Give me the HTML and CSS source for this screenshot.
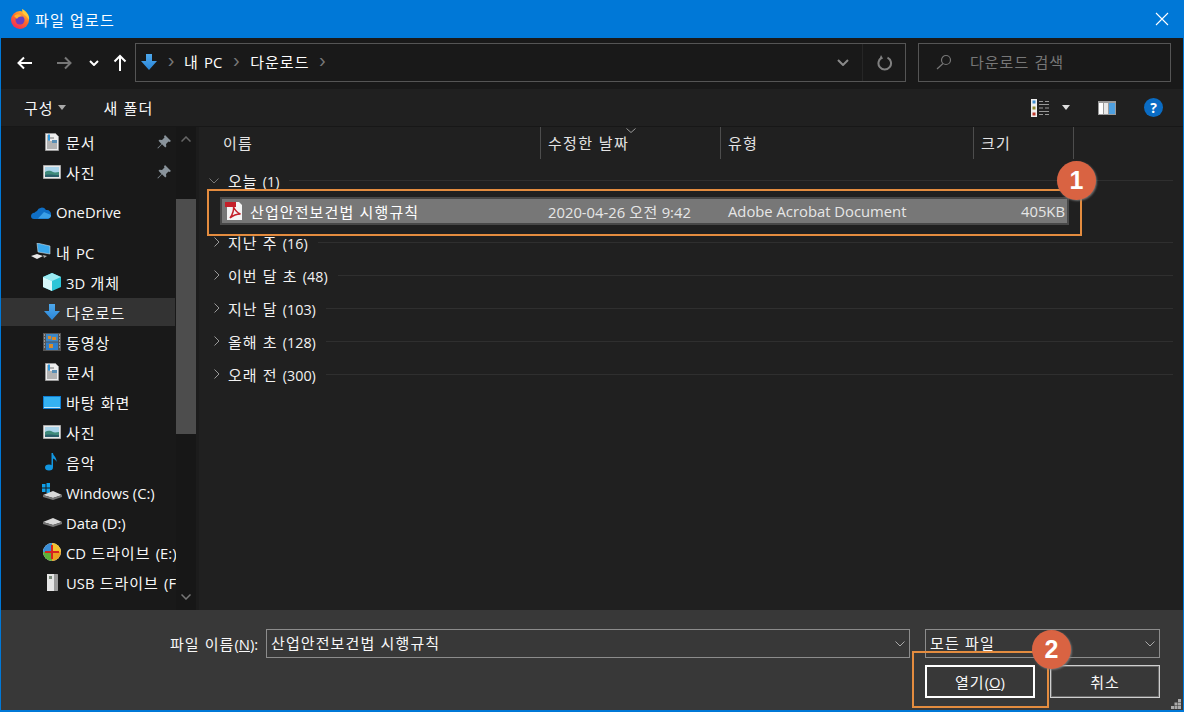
FILE: index.html
```html
<!DOCTYPE html>
<html lang="ko">
<head>
<meta charset="utf-8">
<title>파일 업로드</title>
<link rel="stylesheet" href="styles.css">
</head>
<body>
<svg class="defs" width="0" height="0" aria-hidden="true">
  <defs>
    <linearGradient id="ffg" x1="0.8" y1="0" x2="0.2" y2="1"><stop offset="0" stop-color="#ffc63a"/><stop offset=".45" stop-color="#ff6a2a"/><stop offset="1" stop-color="#f0245e"/></linearGradient>
    <linearGradient id="blue" x1="0" y1="0" x2="0" y2="1"><stop offset="0" stop-color="#4ea8ec"/><stop offset="1" stop-color="#2a86d8"/></linearGradient>
    <symbol id="i-down" viewBox="0 0 18 18"><path d="M6 1h6v7h5l-8 9-8-9h5z" fill="url(#blue)"/></symbol>
    <symbol id="i-doc" viewBox="0 0 18 18"><path d="M2.500.5h10l3 3v14h-13z" fill="#eee" stroke="#999"/><path d="M4 3h3M4 5h7M4 7h3M4 9h10M4 11h10M4 13h10M4 15h10" stroke="#777"/><path d="M5 1.500h2v6H5z" fill="#2f9ae0"/><path d="M9 7h5v3H9z" fill="#5a8fb5"/></symbol>
    <symbol id="i-pic" viewBox="0 0 18 14"><path d="M.5.500h17v13H.5z" fill="#e8e8e8" stroke="#aaa"/><path d="M2 2h14v10H2z" fill="#a9d4ea"/><path d="M2 7c3-2 6-1 8 0s4 0 6 0v5H2z" fill="#3f8a7a"/><path d="M2 10c4-1 8 0 14 0v2H2z" fill="#2a5f6b"/></symbol>
    <symbol id="i-pin" viewBox="0 0 14 14"><path d="M8 0l6 6-1.500 1-1-.5-2.500 2.500.3 2.500-1 1L5 9.200 1 13.500l-.6-.6L4.500 9 1.500 5.700l1-1 2.500.3L7.500 2.500 7 1.500z" fill="#8a949c"/></symbol>
  </defs>
</svg>

<div class="dialog">
  <header class="titlebar">
    <svg class="ff" width="20" height="20" viewBox="0 0 20 20"><circle cx="10" cy="11" r="9" fill="url(#ffg)"/><path d="M12 0c4 2 8 6 7 11-1-2-2-3-3-4-2-1-4-3-4-7z" fill="#ffcb3d"/><circle cx="10" cy="11" r="4.500" fill="#6a3fc2"/><path d="M4 7c3-3 7-2 9 1-3-1-5 0-6 2z" fill="#ffb02e"/></svg>
    <span class="ko title">파일 업로드</span>
    <svg class="close" width="14" height="14" viewBox="0 0 14 14"><path d="M1 1l12 12M13 1L1 13" stroke="#fff" stroke-width="1.100"/></svg>
  </header>

  <div class="addressbar">
    <div class="nav">
      <svg width="16" height="14" viewBox="0 0 16 14"><path d="M15 7H1.500M7 1.500L1.500 7 7 12.500" fill="none" stroke="#fff" stroke-width="2"/></svg>
      <svg class="fwd" width="16" height="14" viewBox="0 0 16 14"><path d="M1 7h13.500M9 1.500L14.500 7 9 12.500" fill="none" stroke="#777" stroke-width="2"/></svg>
      <svg class="hist" width="10" height="6" viewBox="0 0 10 6"><path d="M1 1l4 4 4-4" fill="none" stroke="#fff" stroke-width="2"/></svg>
      <svg class="up" width="14" height="17" viewBox="0 0 14 17"><path d="M7 17V2M1.500 7.500L7 2l5.500 5.500" fill="none" stroke="#fff" stroke-width="2"/></svg>
    </div>
    <div class="path">
      <svg class="path-icon" width="18" height="18"><use href="#i-down"/></svg>
      <span class="crumb-sep">›</span>
      <span class="ko crumb">내 <span class="la">PC</span></span>
      <span class="crumb-sep wide">›</span>
      <span class="ko crumb">다운로드</span>
      <span class="crumb-sep">›</span>
      <svg class="path-drop" width="12" height="7" viewBox="0 0 12 7"><path d="M1 1l5 5 5-5" fill="none" stroke="#8a8a8a" stroke-width="2"/></svg>
      <span class="path-div"></span>
      <svg class="refresh" width="16" height="16" viewBox="0 0 16 16"><path d="M10.500 2.600A6.300 6.300 0 1 1 5 2.600" fill="none" stroke="#808080" stroke-width="2"/><path d="M4 0l2 3.500L2 5z" fill="#808080"/></svg>
    </div>
    <div class="search">
      <svg width="16" height="16" viewBox="0 0 16 16"><circle cx="10" cy="6" r="4.500" fill="none" stroke="#777" stroke-width="1.200"/><path d="M7 9.500L1 15" stroke="#777" stroke-width="1.200"/></svg>
      <span class="ko">다운로드 검색</span>
    </div>
  </div>

  <div class="toolbar">
    <span class="ko tool">구성<i class="caret"></i></span>
    <span class="ko tool new">새 폴더</span>
    <span class="tool-right">
      <svg width="18" height="18" viewBox="0 0 18 18"><path d="M0 0h6v18H0z" fill="#eee"/><path d="M1.500 1.500h3v3h-3z" fill="#3f8fd0"/><path d="M1.500 7.500h3v3h-3z" fill="#8f8a30"/><path d="M1.500 13.500h3v3h-3z" fill="#c0392b"/><path d="M8 2.500h4M14 2.500h4M8 5.500h10M8 9h4M14 9h4M8 12.500h10M8 15.500h4M14 15.500h4" stroke="#999"/></svg>
      <i class="caret light"></i>
      <svg class="pane" width="18" height="14" viewBox="0 0 18 14"><path d="M0 0h18v14H0z" fill="#9a9a9a"/><path d="M1 2h4v11H1z" fill="#fff"/><path d="M6 2h4v11H6z" fill="#e8e8e8"/><path d="M11 2h6v11h-6z" fill="#4ea0e0"/></svg>
      <span class="help">?</span>
    </span>
  </div>

  <div class="body">
    <nav class="sidebar">
      <ul class="tree">
        <li class="row l2"><svg class="ic" width="18" height="18"><use href="#i-doc"/></svg><span class="ko lab">문서</span><svg class="pin" width="14" height="14"><use href="#i-pin"/></svg></li>
        <li class="row l2"><svg class="ic" width="18" height="14"><use href="#i-pic"/></svg><span class="ko lab">사진</span><svg class="pin" width="14" height="14"><use href="#i-pin"/></svg></li>
        <li class="row l1 gap"><svg class="ic" width="20" height="13" viewBox="0 0 20 13"><path d="M6 5a5 5 0 0 1 9-1 4 4 0 0 1 1 .100 4 4 0 0 1 4 4.400c0 2-1 4-3 4.500H3a3 3 0 0 1-3-3c0-2 2-3.500 3.500-3.200A4 4 0 0 1 6 5z" fill="#0f6fc6"/><path d="M7 12.500L13 6l7 3c0 2-1 3.500-3 3.500z" fill="#3aa0e8"/></svg><span class="la lab">OneDrive</span></li>
        <li class="row l1 gap"><svg class="ic" width="20" height="18" viewBox="0 0 20 18"><path d="M6 0l13 3v8L7 9z" fill="#3aa8ec" stroke="#cfd8dc" stroke-width=".6"/><path d="M0 13l6-2 6 2-6 3z" fill="#e8e8e8"/><path d="M12 12l4 1-3 2z" fill="#aaa"/></svg><span class="ko lab">내 <span class="la">PC</span></span></li>
        <li class="row l2"><svg class="ic" width="18" height="18" viewBox="0 0 18 18"><path d="M9 0l9 4v10l-9 4-9-4V4z" fill="#2cc5d8"/><path d="M9 0l9 4-9 4-9-4z" fill="#9beaf2"/><path d="M0 4l9 4v10l-9-4z" fill="#d8f8fb"/></svg><span class="ko lab"><span class="la">3D</span> 개체</span></li>
        <li class="row l2 active"><svg class="ic" width="18" height="18"><use href="#i-down"/></svg><span class="ko lab">다운로드</span></li>
        <li class="row l2"><svg class="ic" width="18" height="18" viewBox="0 0 18 18"><path d="M0 0h18v18H0z" fill="#555"/><path d="M3 1h12v7.500H3z" fill="#3d88c8"/><path d="M3 9.500h12V17H3z" fill="#2f7fcb"/><path d="M5 3h3v3H5zM9 4h4v3H9zM6 11h4v4H6z" fill="#d98b2b"/><path d="M1 2h1M1 5h1M1 8h1M1 11h1M1 14h1M16 2h1M16 5h1M16 8h1M16 11h1M16 14h1" stroke="#ddd"/></svg><span class="ko lab">동영상</span></li>
        <li class="row l2"><svg class="ic" width="18" height="18"><use href="#i-doc"/></svg><span class="ko lab">문서</span></li>
        <li class="row l2"><svg class="ic" width="18" height="13" viewBox="0 0 18 13"><path d="M0 0h18v13H0z" fill="#0f7fd4"/><path d="M1 1h16v10H1z" fill="#35b2f2"/><path d="M1 11h16v1H1z" fill="#bfe6fb"/></svg><span class="ko lab">바탕 화면</span></li>
        <li class="row l2"><svg class="ic" width="18" height="14"><use href="#i-pic"/></svg><span class="ko lab">사진</span></li>
        <li class="row l2"><svg class="ic" width="18" height="18" viewBox="0 0 18 18"><ellipse cx="6" cy="14.500" rx="4" ry="3" fill="#1296e0"/><path d="M8.500 14V0h1.500c0 3 4 4 3.500 9-.5-2-2-3-3.500-3.500V14z" fill="#1296e0"/></svg><span class="ko lab">음악</span></li>
        <li class="row l2 drive"><svg class="ic" width="20" height="18" viewBox="0 0 20 18"><path d="M0 1h3.500v3.500H0zM4.500 0H8v4.500H4.500zM0 5.500h3.500V9H0zM4.500 5.500H8V10H4.500z" fill="#0fa0ea"/><path d="M1 12l10-4 9 4-9 3z" fill="#d8d8d8"/><path d="M1 12l10 3 9-3v2l-9 3-10-3z" fill="#777"/></svg><span class="la lab">Windows (C:)</span></li>
        <li class="row l2 drive"><svg class="ic" width="20" height="10" viewBox="0 0 20 10"><path d="M1 5l10-4 9 4-9 3z" fill="#d8d8d8"/><path d="M1 5l10 3 9-3v2l-9 3-10-3z" fill="#777"/></svg><span class="la lab">Data (D:)</span></li>
        <li class="row l2"><svg class="ic" width="18" height="18" viewBox="0 0 18 18"><circle cx="9" cy="9" r="9" fill="#f2f2f2"/><path d="M9 9V0a9 9 0 0 1 9 9z" fill="#f2c230"/><path d="M9 9H0a9 9 0 0 0 9 9z" fill="#5fb03a"/><path d="M9 9v9a9 9 0 0 0 9-9z" fill="#e9a020"/><path d="M9 9V0a9 9 0 0 0-9 9z" fill="#3a8fd8"/><path d="M8 2h2v14H8zM2 8h14v2H2z" fill="#d8231f"/></svg><span class="ko lab"><span class="la">CD</span> 드라이브 <span class="la">(E:)</span></span></li>
        <li class="row l2"><svg class="ic" width="18" height="18" viewBox="0 0 18 18"><path d="M4 1h10l1 1v15l-1 1H4z" fill="#e6e6e6"/><path d="M11 1h3l1 1v15l-1 1h-3z" fill="#9a9a9a"/><path d="M6 3h3v3H6z" fill="#7a8a7a"/></svg><span class="ko lab"><span class="la">USB</span> 드라이브 <span class="la">(F:)</span></span></li>
      </ul>
      <div class="scrollbar">
        <svg width="10" height="6" viewBox="0 0 10 6"><path d="M.5 5.500L5 1l4.500 4.500" fill="none" stroke="#666" stroke-width="1.500"/></svg>
        <div class="thumb"></div>
        <svg class="sb-down" width="10" height="6" viewBox="0 0 10 6"><path d="M.5.500L5 5 9.500.5" fill="none" stroke="#777" stroke-width="1.500"/></svg>
      </div>
    </nav>

    <main class="content">
      <div class="columns">
        <div class="col c-name ko">이름</div>
        <div class="col c-date ko">수정한 날짜<svg class="sort" width="10" height="5" viewBox="0 0 10 5"><path d="M.5.500L5 4.500 9.500.5" fill="none" stroke="#999"/></svg></div>
        <div class="col c-type ko">유형</div>
        <div class="col c-size ko">크기</div>
      </div>
      <div class="list">
        <div class="group"><svg class="chev" width="10" height="6" viewBox="0 0 10 6"><path d="M.5.500L5 5 9.500.5" fill="none" stroke="#777"/></svg><span class="ko">오늘 <span class="la">(1)</span></span></div>
        <div class="file">
          <svg class="pdf" width="20" height="20" viewBox="0 0 20 20"><path d="M3 1h12l3 3v15H3z" fill="#f4f4f4"/><path d="M1 1h11v5H1z" fill="#c4202a"/><path d="M6 17c3-4 4-9 3.500-11 2 4 4 6 7 7-4 0-7 1-10.500 4z" fill="none" stroke="#c4202a" stroke-width="1.500"/></svg>
          <span class="ko f-name">산업안전보건법 시행규칙</span>
          <span class="f-date"><span class="la">2020-04-26</span> <span class="ko">오전</span> <span class="la">9:42</span></span>
          <span class="la f-type">Adobe Acrobat Document</span>
          <span class="la f-size">405KB</span>
        </div>
        <div class="group"><svg class="chev r" width="6" height="10" viewBox="0 0 6 10"><path d="M.5.500L5 5 .5 9.500" fill="none" stroke="#999"/></svg><span class="ko">지난 주 <span class="la">(16)</span></span></div>
        <div class="group"><svg class="chev r" width="6" height="10" viewBox="0 0 6 10"><path d="M.5.500L5 5 .5 9.500" fill="none" stroke="#999"/></svg><span class="ko">이번 달 초 <span class="la">(48)</span></span></div>
        <div class="group"><svg class="chev r" width="6" height="10" viewBox="0 0 6 10"><path d="M.5.500L5 5 .5 9.500" fill="none" stroke="#999"/></svg><span class="ko">지난 달 <span class="la">(103)</span></span></div>
        <div class="group"><svg class="chev r" width="6" height="10" viewBox="0 0 6 10"><path d="M.5.500L5 5 .5 9.500" fill="none" stroke="#999"/></svg><span class="ko">올해 초 <span class="la">(128)</span></span></div>
        <div class="group"><svg class="chev r" width="6" height="10" viewBox="0 0 6 10"><path d="M.5.500L5 5 .5 9.500" fill="none" stroke="#999"/></svg><span class="ko">오래 전 <span class="la">(300)</span></span></div>
      </div>
    </main>
  </div>

  <footer class="footer">
    <div class="f-row">
      <label class="ko f-label">파일 이름<span class="la">(<u>N</u>):</span></label>
      <div class="combo name"><span class="ko">산업안전보건법 시행규칙</span><svg width="10" height="6" viewBox="0 0 10 6"><path d="M.5.500L5 5 9.500.5" fill="none" stroke="#aaa"/></svg></div>
      <div class="combo kind"><span class="ko">모든 파일</span><svg width="10" height="6" viewBox="0 0 10 6"><path d="M.5.500L5 5 9.500.5" fill="none" stroke="#aaa"/></svg></div>
    </div>
    <div class="b-row">
      <button class="btn primary"><span class="ko">열기</span><span class="la">(<u>O</u>)</span></button>
      <button class="btn"><span class="ko">취소</span></button>
    </div>
    <svg class="grip" width="10" height="10" viewBox="0 0 10 10"><path d="M7 0h3v3H7zM3.500 3.500h3v3h-3zM7 3.500h3v3H7zM0 7h3v3H0zM3.500 7h3v3h-3zM7 7h3v3H7z" fill="#aaa"/></svg>
  </footer>

  <div class="mark m1"></div>
  <div class="mark m2"></div>
  <div class="badge b1">1</div>
  <div class="badge b2">2</div>
</div>
</body>
</html>
```
FILE: styles.css
```css
* { box-sizing: border-box; }
html, body { margin: 0; padding: 0; height: 100%; }
body { background: #202020; font-family: "Open Sans", "Noto Sans CJK KR", sans-serif; font-size: 15px; color: #f8f8f8; overflow: hidden; }
.defs { position: absolute; }
.ko { font-family: "Noto Sans CJK KR", sans-serif; font-size: 15px; letter-spacing: 1px; font-weight: 400; }
.la { font-family: "Open Sans", sans-serif; font-size: 14.800px; letter-spacing: 0; }
ul { list-style: none; margin: 0; padding: 0; }

.dialog { position: relative; width: 1184px; height: 712px; display: flex; flex-direction: column; border: 1px solid #0078d7; border-top: 0; border-bottom: 2px solid #0078d7; }

.titlebar { height: 38px; flex: none; background: #0078d7; display: flex; align-items: center; padding: 0 0 0 9px; gap: 5px; color: #fff; }
.title { letter-spacing: 1.100px; }
.close { margin-left: auto; margin-right: 14px; }

.addressbar { height: 51px; flex: none; background: #191919; display: flex; align-items: flex-start; padding-top: 5px; }
.nav { width: 134px; height: 39px; display: flex; align-items: center; padding-left: 16px; flex: none; }
.fwd { margin-left: 23px; }
.hist { margin-left: 17px; }
.up { margin-left: 14px; }
.path { width: 771px; height: 39px; border: 1px solid #555; display: flex; align-items: center; padding: 0 0 2px 4px; color: #fff; }
.path-icon { flex: none; }
.crumb-sep { color: #777; width: 26px; text-align: center; font-size: 20px; line-height: 1; margin-top: -4px; font-family: "Liberation Sans", sans-serif; }
.crumb-sep.wide { width: 28px; }
.path-drop { margin-left: auto; margin-right: 13px; margin-top: 2px; }
.path-div { width: 1px; height: 37px; margin-bottom: -2px; background: #262626; }
.refresh { margin-left: 14px; margin-right: 12px; margin-top: 2px; }
.search { width: 253px; height: 39px; margin-left: 12px; border: 1px solid #555; display: flex; align-items: center; padding: 0 0 2px 17px; gap: 18px; color: #777; flex: none; }

.toolbar { height: 38px; flex: none; background: #202020; display: flex; align-items: center; padding-left: 23px; border-bottom: 1px solid #171717; }
.tool { display: flex; align-items: center; }
.new { margin-left: 38px; }
.caret { display: inline-block; width: 0; height: 0; border: 4px solid transparent; border-top: 5px solid #aaa; border-bottom: 0; margin-left: 4px; }
.caret.light { border-top-color: #ddd; margin-left: 13px; }
.tool-right { margin-left: auto; display: flex; align-items: center; padding-right: 20px; }
.pane { margin-left: 28px; }
.help { width: 19px; height: 19px; border-radius: 50%; background: #0a6cc4; color: #fff; margin-left: 28px; font: 700 14px/19px "Open Sans", sans-serif; text-align: center; }

.body { flex: 1; min-height: 0; display: flex; background: #202020; }
.sidebar { width: 198px; flex: none; background: #191919; display: flex; position: relative; overflow: hidden; border-right: 3px solid #1c1c1c; }
.tree { width: 175px; flex: none; overflow: hidden; }
.row { height: 30px; display: flex; align-items: center; white-space: nowrap; position: relative; overflow: hidden; }
.row.gap { margin-top: 10px; }
.l1 { padding-left: 30px; }
.l2 { padding-left: 41px; }
.ic { flex: none; width: 20px; margin-right: 4px; }
.l1 .ic { margin-right: 5px; }
.drive .lab { padding-top: 1px; }
.row.active { background: #333; margin-right: 1px; height: 28px; margin-top: 1px; margin-bottom: 1px; }
.pin { position: absolute; left: 156px; top: 8px; }
.scrollbar { width: 20px; flex: none; background: #171717; display: flex; flex-direction: column; align-items: center; padding-top: 9px; position: relative; }
.thumb { width: 20px; height: 235px; background: #4d4d4d; margin-top: 57px; }
.sb-down { margin-top: 160px; }

.content { flex: 1; min-width: 0; display: flex; flex-direction: column; }
.columns { height: 32px; display: flex; flex: none; }
.col { padding: 5px 0 0 7px; border-right: 1px solid #4d4d4d; position: relative; height: 32px; color: #e4e4e4; letter-spacing: 1.300px; }
.c-name { width: 342px; padding-left: 24px; }
.c-date { width: 180px; }
.c-type { width: 253px; }
.c-size { width: 100px; }
.sort { position: absolute; left: 85px; top: 1px; }
.list { padding: 5px 10px 0 0; display: flex; flex-direction: column; }
.group { height: 33px; display: flex; align-items: center; position: relative; padding-left: 29px; color: #f2f2f2; gap: 10px; }
.group .la { font-size: 14.300px; }
.group::after { content: ""; flex: 1; height: 1px; background: #2f2f2f; }
.chev { position: absolute; left: 10px; top: 14px; }
.chev.r { left: 15px; top: 11px; }
.file { height: 28px; width: 849px; margin: 0 0 1px 21px; background: #777; border: 2px solid #484848; display: flex; align-items: center; white-space: nowrap; }
.pdf { margin-left: 2px; flex: none; }
.f-name { margin-left: 6px; width: 298px; color: #fff; flex: none; letter-spacing: 1.100px; }
.f-date { width: 180px; color: #e6e6e6; flex: none; }
.f-date .ko { letter-spacing: .5px; }
.f-type { width: 270px; color: #e6e6e6; flex: none; }
.f-size { width: 67px; color: #e6e6e6; flex: none; text-align: right; }

.footer { height: 100px; flex: none; background: #383838; padding: 19px 0 0; display: flex; flex-direction: column; position: relative; }
.f-row { display: flex; align-items: center; height: 29px; }
.f-label { margin-left: 169px; width: 96px; flex: none; white-space: nowrap; }
.combo { height: 29px; border: 1px solid #8c8c8c; display: flex; align-items: center; padding: 0 4px 2px 4px; justify-content: space-between; flex: none; }
.combo .ko { letter-spacing: 1.100px; }
.combo svg { margin-top: 2px; }
.combo.name { width: 644px; }
.combo.kind { width: 235px; margin-left: 15px; }
.b-row { display: flex; margin-top: 7px; padding-left: 924px; gap: 15px; }
.btn { width: 110px; height: 33px; background: #383838; color: #f8f8f8; border: 1px solid #cfcfcf; padding: 0; outline: 1px solid #6a6a6a; outline-offset: -2px; }
.btn.primary { border: 2px solid #fff; outline: 0; }
.grip { position: absolute; right: 2px; bottom: 1px; }

.mark { position: absolute; border: 2px solid #e48c3f; }
.m1 { left: 206px; top: 189px; width: 875px; height: 47px; }
.m2 { left: 911px; top: 651px; width: 137px; height: 57px; }
.badge { position: absolute; width: 39px; height: 39px; border-radius: 50%; background: #d96342; color: #fff; font: 700 25px/39px "Liberation Sans", sans-serif; text-align: center; box-shadow: 1px 1px 2px rgba(130,130,130,.8); }
.b1 { left: 1056px; top: 161px; }
.b2 { left: 1031px; top: 630px; }
```
